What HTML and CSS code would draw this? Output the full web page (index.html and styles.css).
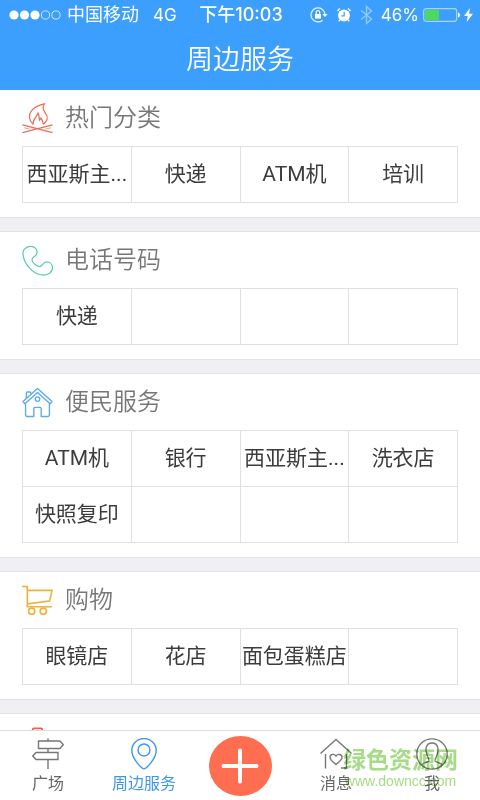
FILE: index.html
```html
<!DOCTYPE html>
<html lang="zh-CN">
<head>
<meta charset="utf-8">
<meta name="viewport" content="width=device-width, initial-scale=1">
<title>周边服务</title>
<link rel="stylesheet" href="styles.css">
</head>
<body>
<header class="header">
  <div class="status">
    <div class="status-left">
      <svg class="signal" width="52" height="12" viewBox="0 0 52 12">
        <g fill="#fff"><circle cx="5" cy="6" r="4.6"/><circle cx="15.5" cy="6" r="4.6"/><circle cx="26" cy="6" r="4.6"/></g>
        <g fill="none" stroke="#d3e9ff" stroke-width="1"><circle cx="36.5" cy="6" r="4.1"/><circle cx="47" cy="6" r="4.1"/></g>
      </svg>
      <span>中国移动</span>
      <span class="network">4G</span>
    </div>
    <div class="status-time">下午10:03</div>
    <div class="status-right">
      <svg width="18" height="16" viewBox="0 0 18 16" fill="none" stroke="#e4f2ff" stroke-width="1.3">
        <path d="M12.6 13.2A7 7 0 1 1 15 7.6"/><path d="M12.4 7h5.2L15 10z" fill="#fff" stroke="none"/>
        <path d="M5 7h6v4.6H5z" fill="#fff" stroke="none"/><path d="M6.3 7V5.4a1.7 1.7 0 0 1 3.4 0V7"/>
      </svg>
      <svg width="16" height="16" viewBox="0 0 16 16">
        <circle cx="8" cy="8.4" r="6" fill="#fff"/>
        <path d="M1.500 4a9 9 0 0 1 2.500-2.500M14.500 4a9 9 0 0 0-2.500-2.500M3.800 13l-1 1.200M12.200 13l1 1.200" stroke="#fff" stroke-width="1.400" fill="none"/>
        <path d="M8.200 4.800v4H5.4" stroke="#3c9ffe" stroke-width="1.2" fill="none"/>
      </svg>
      <svg width="13" height="20" viewBox="0 0 13 20" fill="none" stroke="#93c9ff" stroke-width="1.4">
        <path d="M1 5.500l10.500 8.500L6.500 18.500V1.500L11.500 6 1 14.500"/>
      </svg>
      <span class="percent">46%</span>
      <span class="battery">
        <svg width="37" height="16" viewBox="0 0 37 16">
          <rect x=".7" y="1.700" width="33" height="12.600" rx="2.500" fill="none" stroke="#a8d4ff" stroke-width="1.200"/>
          <rect x="2" y="3" width="14" height="10" rx="1" fill="#4bd964"/>
          <path d="M35 5.500q2 .5 2 2.500t-2 2.500z" fill="#fff"/>
        </svg>
        <svg width="9" height="14" viewBox="0 0 9 14"><path d="M6 0L0 8h3.700L2.700 14 9 5.700H5z" fill="#fff"/></svg>
      </span>
    </div>
  </div>
  <h1 class="title">周边服务</h1>
</header>

<main class="content">
  <section class="group">
    <h2 class="group-title">
      <svg class="group-icon" viewBox="0 0 32 32" fill="none" stroke="#ee6b57" stroke-width="1.300">
        <path d="M.5 22.500l31 8M31.500 22.500l-31 8"/><path d="M2 25.500l6 1.500M30 25.500l-6 1.500" stroke-width=".7"/>
        <path d="M11.500 22C7 18 6.500 12.500 9.500 8.500 12 5 16 2.500 23 1 20.500 5 22.500 8 24.500 11c3 4 1.500 8-2.500 11"/>
        <path d="M11.500 22c-.5-5 3-7 5-11.500 1.500 2.500 1 4.500 1.500 7l1.500-2c1.500 2.500 2.500 4 2.500 6.500"/>
      </svg>
      热门分类
    </h2>
    <div class="grid">
      <a class="cell" href="#">西亚斯主...</a><a class="cell" href="#">快递</a><a class="cell" href="#">ATM机</a><a class="cell" href="#">培训</a>
    </div>
  </section>

  <section class="group">
    <h2 class="group-title">
      <svg class="group-icon" viewBox="0 0 32 32" fill="none" stroke="#58cdb0" stroke-width="1.300">
        <path d="M1 8C1 4 5 1.500 9 1.500c4.500 0 6.800 3.200 6.500 6.500-.2 4-5.500 4.500-5.200 7.500.4 3 4.500 6.700 8 6.700 3.200 0 2.700-4.700 7.200-4.700 3.500 0 6 2.500 6 6 0 4.500-4 7.500-9.500 7.500C11 31 1 18.500 1 8z"/>
      </svg>
      电话号码
    </h2>
    <div class="grid">
      <a class="cell" href="#">快递</a><span class="cell"></span><span class="cell"></span><span class="cell"></span>
    </div>
  </section>

  <section class="group">
    <h2 class="group-title">
      <svg class="group-icon" viewBox="0 0 32 32" fill="none" stroke="#5babe6" stroke-width="1.400" stroke-linejoin="round">
        <path d="M16 1.500L1 15l2 2.400L16 5.800l13 11.600 2-2.400z"/>
        <path d="M4.500 11.500V6.200q0-1 1-1H8q1 0 1 1v1.300"/>
        <path d="M3.700 17v12q0 1.500 1.500 1.500h7V22q0-1 1-1h5.600q1 0 1 1v8.500h7q1.500 0 1.500-1.500V17"/>
        <circle cx="16" cy="12.500" r="2.300"/>
      </svg>
      便民服务
    </h2>
    <div class="grid">
      <a class="cell" href="#">ATM机</a><a class="cell" href="#">银行</a><a class="cell" href="#">西亚斯主...</a><a class="cell" href="#">洗衣店</a>
      <a class="cell" href="#">快照复印</a><span class="cell"></span><span class="cell"></span><span class="cell"></span>
    </div>
  </section>

  <section class="group">
    <h2 class="group-title">
      <svg class="group-icon" viewBox="0 0 32 32" fill="none" stroke="#f0b23c" stroke-width="1.700">
        <path d="M0 1.500h5.500V22.500H31M5.500 5.500H31L28.500 16.500 5.500 19.500"/>
        <circle cx="10" cy="27" r="3.200"/><circle cx="22" cy="27" r="3.200"/>
      </svg>
      购物
    </h2>
    <div class="grid">
      <a class="cell" href="#">眼镜店</a><a class="cell" href="#">花店</a><a class="cell" href="#">面包蛋糕店</a><span class="cell"></span>
    </div>
  </section>

  <section class="group">
    <div class="group-title">
      <svg class="group-icon" viewBox="0 0 32 32" fill="none" stroke="#e8634f" stroke-width="1.800">
        <path d="M11 7V3q0-1.500 1.500-1.500h7Q21 1.500 21 3v4M2 7h28v22H2z"/>
      </svg>
    </div>
  </section>
</main>

<nav class="tabs">
  <a class="tab" href="#">
    <svg class="tab-icon" viewBox="0 0 32 32" fill="none" stroke="#777" stroke-width="1.400">
      <path d="M16 .5V3M16 10.500v4M16 21.500V31M6.500 3H28l3.300 3.700L28 10.500H6.500zM26 14.500H4L.8 18 4 21.500h22z"/>
    </svg>
    <span>广场</span>
  </a>
  <a class="tab active" href="#">
    <svg class="tab-icon" viewBox="0 0 32 32" fill="none" stroke="#3d97ee" stroke-width="1.400">
      <path d="M16 30.800C14 30.800 3.800 21 3.800 12.500A12.200 12 0 0 1 28.200 12.500C28.200 21 18 30.800 16 30.800z"/><circle cx="16" cy="12" r="6"/>
    </svg>
    <span>周边服务</span>
  </a>
  <button class="add" type="button" aria-label="发布">
    <svg width="38" height="38" viewBox="0 0 38 38" fill="none" stroke="#fff" stroke-width="4" stroke-linecap="round"><path d="M19 3.500v31M2.500 19h33"/></svg>
  </button>
  <a class="tab" href="#">
    <svg class="tab-icon" viewBox="0 0 32 32" fill="none" stroke="#777" stroke-width="1.400">
      <path d="M.5 15.500L16 1.500l15.500 14M5.500 16v14.500M21 30h5.500V16"/>
      <path d="M16 26.500c-3-2.500-6-4.500-6-7.200 0-3 4-4 6-1.300 2-2.700 6-1.700 6 1.300 0 2.700-3 4.700-6 7.200z"/>
    </svg>
    <span>消息</span>
  </a>
  <a class="tab" href="#">
    <svg class="tab-icon" viewBox="0 0 32 32" fill="none" stroke="#777" stroke-width="1.300">
      <circle cx="16" cy="16" r="15.200"/>
      <path d="M5.500 27c1.500-2 6.500-2.500 7.300-4 .6-1.500-.2-2.500-1-4C8.500 12 9.500 5 16 5s7.500 7 4.200 14c-.8 1.500-1.600 2.500-1 4 .8 1.500 5.800 2 7.300 4"/>
    </svg>
    <span>我</span>
  </a>
  <div class="watermark">
    <strong class="mark-name">绿色资源网</strong>
    <span class="mark-url">www.downcc.com</span>
  </div>
</nav>
</body>
</html>
```
FILE: styles.css
```css
* {
  box-sizing: border-box;
}

body {
  margin: 0;
  height: 100vh;
  display: flex;
  flex-direction: column;
  background: #efeff4;
  color: #3c3c3c;
  font-family: Roboto, "Noto Sans CJK SC", sans-serif;
}

a {
  color: inherit;
  text-decoration: none;
}

svg {
  display: block;
  flex: none;
}

.header {
  flex: none;
  background: #3c9ffe;
  color: #fff;
}

.status {
  display: grid;
  grid-template-columns: 1fr auto 1fr;
  align-items: center;
  height: 30px;
  padding: 0 7px 0 9px;
  font-family: Inter, "Noto Sans CJK SC", sans-serif;
  font-size: 18px;
  line-height: 28px;
  white-space: nowrap;
}

.status-left,
.status-right,
.battery {
  display: flex;
  align-items: center;
  gap: 6px;
}

.status-right {
  justify-content: flex-end;
  gap: 8px;
}

.network {
  margin-left: 8px;
  font-size: 17px;
}

.status-time {
  font-weight: 500;
}

.percent {
  font-size: 17px;
}

.battery {
  gap: 4px;
  margin-left: -4px;
}

.title {
  margin: 0;
  height: 60px;
  font-size: 27px;
  font-weight: 350;
  line-height: 60px;
  text-align: center;
}

.content {
  flex: 1;
  min-height: 0;
  overflow: hidden;
}

.group {
  margin-bottom: 15px;
  padding: 0 22px 14px;
  background: #fff;
  box-shadow: 0 0 0 1px #e2e2e6;
}

.group-title {
  display: flex;
  align-items: center;
  gap: 12px;
  height: 56px;
  margin: 0;
  color: #777;
  font-size: 24px;
  font-weight: 350;
  line-height: 36px;
}

.group-icon {
  width: 31px;
  height: 31px;
}

.grid {
  display: grid;
  grid-template-columns: repeat(4, 1fr);
  border: solid #e0e0e0;
  border-width: 1px 0 0 1px;
}

.cell {
  height: 56px;
  border: solid #e0e0e0;
  border-width: 0 1px 1px 0;
  font-size: 21px;
  line-height: 55px;
  text-align: center;
  white-space: nowrap;
}

.tabs {
  position: relative;
  flex: none;
  display: grid;
  grid-template-columns: repeat(5, 1fr);
  height: 70px;
  border-top: 1px solid #ddd;
  background: #fff;
  color: #666;
}

.tab {
  display: flex;
  flex-direction: column;
  align-items: center;
  padding-top: 7px;
  font-size: 16px;
  line-height: 28px;
}

.tab-icon {
  width: 32px;
  height: 32px;
}

.active {
  color: #3d97ee;
}

.add {
  display: grid;
  place-items: center;
  place-self: center;
  width: 63px;
  height: 60px;
  padding: 0;
  border: 0;
  border-radius: 50%;
  background: #ff6e50;
}

.watermark {
  position: absolute;
  right: 22px;
  bottom: 11px;
  display: flex;
  flex-direction: column;
  align-items: center;
  color: #a5dc86;
  mix-blend-mode: multiply;
  pointer-events: none;
}

.mark-name {
  font-size: 23px;
  line-height: 24px;
}

.mark-url {
  font-family: "Liberation Sans", sans-serif;
  font-size: 14px;
  line-height: 16px;
}
```
